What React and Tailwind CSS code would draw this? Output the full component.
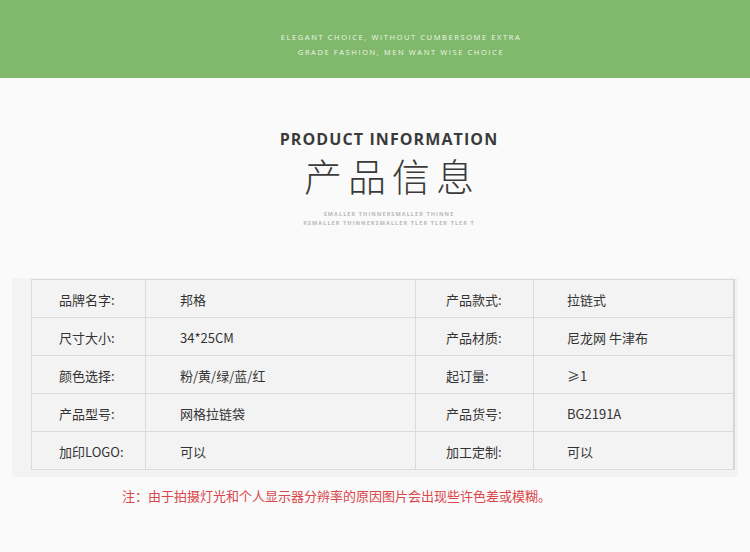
export default function App() {
  const rows = [
    ["品牌名字:", "邦格", "产品款式:", "拉链式"],
    ["尺寸大小:", "34*25CM", "产品材质:", "尼龙网 牛津布"],
    ["颜色选择:", "粉/黄/绿/蓝/红", "起订量:", "≥1"],
    ["产品型号:", "网格拉链袋", "产品货号:", "BG2191A"],
    ["加印LOGO:", "可以", "加工定制:", "可以"],
  ];
  const cjk = { fontFamily: '"Noto Sans CJK SC", "Noto Sans", sans-serif' };
  return (
    <div className="w-[750px] h-[552px] bg-[#fafafa] overflow-hidden" style={cjk}>
      <div className="h-[78px] bg-[#80b96b] flex flex-col items-center pt-[31px] pl-[52px] gap-[3px]">
        <div className="text-[7.5px] leading-[12px] tracking-[1.6px] text-[#eef5e8]" style={{ fontFamily: '"Open Sans", sans-serif' }}>
          ELEGANT CHOICE, WITHOUT CUMBERSOME EXTRA
        </div>
        <div className="text-[7.5px] leading-[12px] tracking-[1.6px] text-[#eef5e8]" style={{ fontFamily: '"Open Sans", sans-serif' }}>
          GRADE FASHION, MEN WANT WISE CHOICE
        </div>
      </div>
      <div className="flex flex-col items-center pl-[28px] pt-[51px]">
        <div className="text-[16px] leading-[20px] font-bold tracking-[1.1px] text-[#3a3a3a]" style={{ fontFamily: '"Open Sans", sans-serif' }}>
          PRODUCT INFORMATION
        </div>
        <div className="mt-[6px] text-[38px] leading-[40px] font-extralight tracking-[6px] pl-[6px] text-[#3a3a3a]">
          产品信息
        </div>
        <div className="mt-[15px] text-[5.5px] leading-[9px] tracking-[1.1px] text-[#b8b8b8] text-center font-bold" style={{ fontFamily: '"Open Sans", sans-serif' }}>
          <div>SMALLER THINNERSMALLER THINNE</div>
          <div>RSMALLER THINNERSMALLER TLER TLER TLER T</div>
        </div>
      </div>
      <div className="mt-[50px] mx-[12px] w-[726px] bg-[#f3f3f3] pt-[1px] pb-[7px] pl-[19px]">
        <table className="border-collapse text-[13px] text-[#333]" style={{ borderRight: "2px solid #d6d6d6" }}>
          <tbody>
            {rows.map((r, i) => (
              <tr key={i} className="h-[38px]">
                <td className="w-[114px] border border-[#dadada] pl-[27px] pt-[3px]">{r[0]}</td>
                <td className="w-[270px] border border-[#dadada] pl-[34px] pt-[3px]">{r[1]}</td>
                <td className="w-[118px] border border-[#dadada] pl-[30px] pt-[3px]">{r[2]}</td>
                <td className="w-[200px] border border-[#dadada] pl-[33px] pt-[3px]">{r[3]}</td>
              </tr>
            ))}
          </tbody>
        </table>
      </div>
      <div className="pl-[122px] mt-[9px] text-[13px] text-[#d9474a]">
        注：由于拍摄灯光和个人显示器分辨率的原因图片会出现些许色差或模糊。
      </div>
    </div>
  );
}
